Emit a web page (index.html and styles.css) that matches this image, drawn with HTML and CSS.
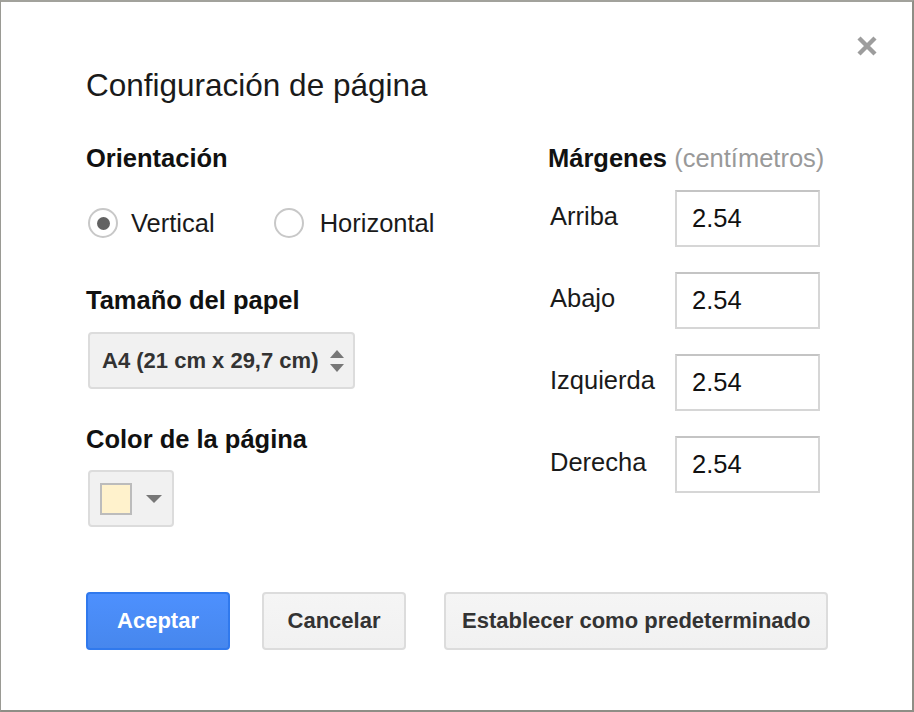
FILE: index.html
```html
<!DOCTYPE html>
<html lang="es">
<head>
<meta charset="utf-8">
<title>Configuración de página</title>
<link rel="stylesheet" href="styles.css">
</head>
<body>
<div class="dialog">
  <button class="close" aria-label="Cerrar">
    <svg width="22" height="22" viewBox="0 0 22 22"><path d="M3 3 L19 19 M19 3 L3 19" stroke="#9d9d9d" stroke-width="4.4" stroke-linecap="butt"/></svg>
  </button>
  <div class="title">Configuración de página</div>
  <div class="columns">
    <div class="left">
      <div class="heading">Orientación</div>
      <div class="radios">
        <label class="radio first"><span class="circle checked"></span><span>Vertical</span></label>
        <label class="radio"><span class="circle"></span><span>Horizontal</span></label>
      </div>
      <div class="heading h-paper">Tamaño del papel</div>
      <div class="select">
        <span>A4 (21 cm x 29,7 cm)</span>
        <span class="arrows"><span class="up"></span><span class="down"></span></span>
      </div>
      <div class="heading h-color">Color de la página</div>
      <div class="colorbtn">
        <span class="swatch"></span>
        <span class="tri"></span>
      </div>
    </div>
    <div class="right">
      <div class="heading">Márgenes <span class="unit">(centímetros)</span></div>
      <div class="rows">
        <div class="row"><span class="lbl">Arriba</span><div class="input">2.54</div></div>
        <div class="row"><span class="lbl">Abajo</span><div class="input">2.54</div></div>
        <div class="row"><span class="lbl">Izquierda</span><div class="input">2.54</div></div>
        <div class="row"><span class="lbl">Derecha</span><div class="input">2.54</div></div>
      </div>
    </div>
  </div>
  <div class="footer">
    <button class="btn primary">Aceptar</button>
    <button class="btn">Cancelar</button>
    <button class="btn wide">Establecer como predeterminado</button>
  </div>
</div>
</body>
</html>
```
FILE: styles.css
```css
html, body {
  margin: 0;
  padding: 0;
  background: #fff;
}
.dialog {
  position: relative;
  box-sizing: border-box;
  width: 914px;
  height: 712px;
  border-top: 2px solid #a2a29c;
  border-left: 1px solid #9a9a94;
  border-right: 2px solid #8e8e86;
  border-bottom: 2px solid #8e8e86;
  padding: 65px 0 0 85px;
  font-family: "Liberation Sans", Arial, sans-serif;
  color: #1a1a1a;
}
.close {
  position: absolute;
  top: 33px;
  right: 34px;
  width: 22px;
  height: 22px;
  padding: 0;
  border: 0;
  background: none;
}
.close svg { display: block; }
.title {
  font-size: 31.5px;
  line-height: 36px;
  height: 36px;
  margin-bottom: 40px;
}
.columns {
  display: flex;
}
.left {
  width: 462px;
}
.heading {
  font-weight: bold;
  font-size: 25.5px;
  line-height: 30px;
  height: 30px;
  white-space: nowrap;
  color: #111;
}
.unit {
  font-weight: normal;
  color: #999;
}
.radios {
  display: flex;
  margin-top: 35px;
  margin-left: 2px;
  height: 30px;
  align-items: center;
  font-size: 25.5px;
}
.radio {
  display: flex;
  align-items: center;
  gap: 13px;
}
.radio.first {
  margin-right: 59px;
}
.radio + .radio { gap: 16px; }
.circle {
  box-sizing: border-box;
  width: 30px;
  height: 30px;
  border: 2px solid #c8c8c8;
  border-radius: 50%;
  display: flex;
  align-items: center;
  justify-content: center;
}
.circle.checked::after {
  content: "";
  width: 13px;
  height: 13px;
  border-radius: 50%;
  background: #626262;
}
.h-paper { margin-top: 47px; }
.h-color { margin-top: 35px; }
.select {
  box-sizing: border-box;
  margin-top: 17px;
  margin-left: 2px;
  width: 267px;
  height: 57px;
  border: 2px solid #dcdcdc;
  border-radius: 4px;
  background: #f1f1f1;
  display: flex;
  align-items: center;
  padding-left: 12px;
  font-weight: bold;
  font-size: 22px;
  color: #333;
}
.arrows {
  display: flex;
  flex-direction: column;
  gap: 6px;
  margin-left: 12px;
}
.up, .down {
  width: 0;
  height: 0;
  border-left: 7px solid transparent;
  border-right: 7px solid transparent;
}
.up { border-bottom: 8px solid #777; }
.down { border-top: 8px solid #777; }
.colorbtn {
  box-sizing: border-box;
  margin-top: 16px;
  margin-left: 2px;
  width: 86px;
  height: 57px;
  border: 2px solid #dcdcdc;
  border-radius: 4px;
  background: #f1f1f1;
  display: flex;
  align-items: center;
  padding-left: 10px;
}
.swatch {
  box-sizing: border-box;
  width: 32px;
  height: 32px;
  background: #fff2cc;
  border: 2px solid #bcbcbc;
}
.tri {
  margin-left: 14px;
  width: 0;
  height: 0;
  border-left: 8px solid transparent;
  border-right: 8px solid transparent;
  border-top: 8px solid #777;
}
.right {
  flex: 1;
}
.rows {
  margin-top: 17px;
  display: flex;
  flex-direction: column;
  gap: 25px;
}
.row {
  display: flex;
  align-items: center;
  height: 57px;
}
.lbl {
  width: 127px;
  padding-left: 2px;
  box-sizing: border-box;
  font-size: 25.5px;
  margin-top: -5px;
}
.input {
  box-sizing: border-box;
  width: 145px;
  height: 57px;
  border: 2px solid #d6d6d6;
  border-top-color: #c4c4c4;
  display: flex;
  align-items: center;
  padding-left: 15px;
  font-size: 25.5px;
  color: #111;
}
.footer {
  display: flex;
  margin-top: 65px;
  height: 58px;
}
.btn {
  box-sizing: border-box;
  min-width: 144px;
  height: 58px;
  padding: 0 16px;
  border: 2px solid #dcdcdc;
  border-radius: 4px;
  background: linear-gradient(#f5f5f5, #f1f1f1);
  font-family: "Liberation Sans", Arial, sans-serif;
  font-weight: bold;
  font-size: 22px;
  color: #333;
  margin-right: 32px;
}
.btn.primary {
  background: linear-gradient(#4d90fe, #4787ed);
  border-color: #3079ed;
  color: #fff;
}
.btn + .btn + .btn { margin-left: 6px; }
```
